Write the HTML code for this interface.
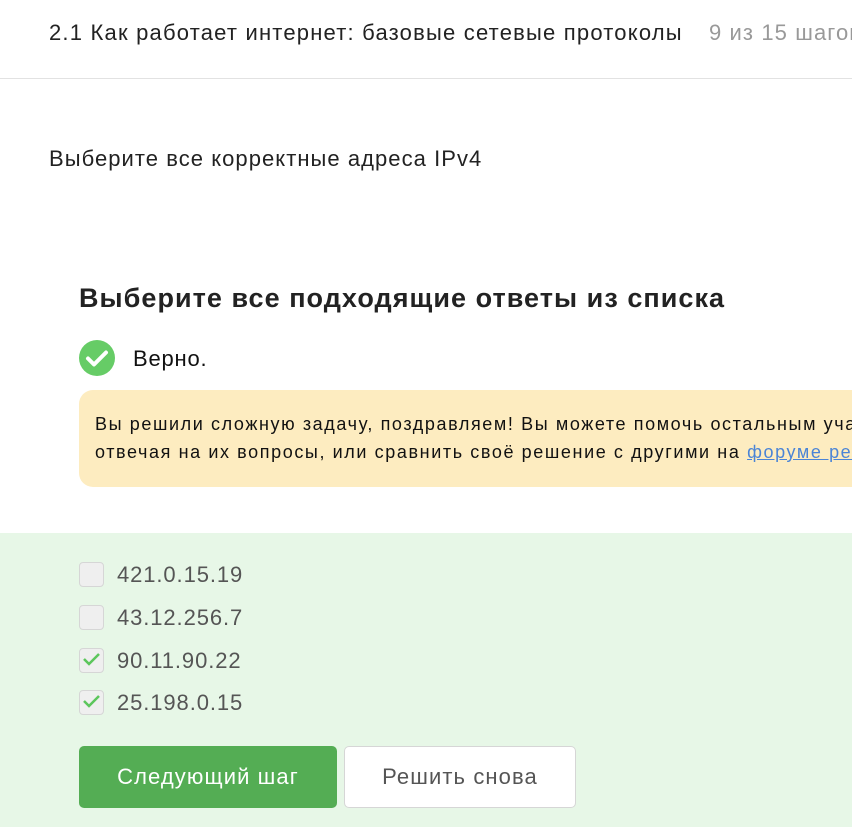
<!DOCTYPE html>
<html><head><meta charset="utf-8"><style>
*{box-sizing:border-box;margin:0;padding:0}
html,body{width:852px;height:827px;overflow:hidden}
body{background:#fff;font-family:"Liberation Sans",sans-serif;color:#222}
#w{position:relative;width:852px;height:827px;overflow:hidden}
.a{position:absolute;white-space:nowrap}
.cb{position:absolute;left:79px;width:25px;height:25px;border:1px solid #d6d6d6;border-radius:4px;background:#efefef}
.ip{position:absolute;left:117px;font-size:22px;color:#555;line-height:26px;letter-spacing:0.9px}
</style></head><body><div id="w">
<div class="a" style="left:49px;top:20px;font-size:22px;line-height:26px;color:#222;letter-spacing:1.2px">2.1 Как работает интернет: базовые сетевые протоколы</div>
<div class="a" style="left:709px;top:20px;font-size:22px;line-height:26px;color:#999;letter-spacing:1.1px">9 из 15 шагов</div>
<div class="a" style="left:0;top:78px;width:852px;height:1px;background:#e2e2e2"></div>
<div class="a" style="left:49px;top:146px;font-size:22px;line-height:26px;letter-spacing:1.05px">Выберите все корректные адреса IPv4</div>
<div class="a" style="left:79px;top:282px;font-size:27px;font-weight:bold;line-height:32px;color:#222;letter-spacing:1.05px">Выберите все подходящие ответы из списка</div>
<svg class="a" style="left:79px;top:340px" width="36" height="36" viewBox="0 0 36 36"><circle cx="18" cy="18" r="18" fill="#66cc66"/><path d="M9 18.5l6 6 12-12" stroke="#fff" stroke-width="4" fill="none" stroke-linecap="round" stroke-linejoin="round"/></svg>
<div class="a" style="left:133px;top:346px;font-size:22px;line-height:26px;color:#111;letter-spacing:0.8px">Верно.</div>
<div class="a" style="left:79px;top:390px;width:773px;height:97px;background:#fdecc0;border-radius:14px 0 0 14px"></div>
<div class="a" style="left:95px;top:410px;width:757px;overflow:hidden;font-size:18px;line-height:28px;color:#111;letter-spacing:1.6px">Вы решили сложную задачу, поздравляем! Вы можете помочь остальным учащимся,<br>отвечая на их вопросы, или сравнить своё решение с другими на <span style="color:#4a84d6;text-decoration:underline">форуме решений</span></div>
<div class="a" style="left:0;top:533px;width:852px;height:294px;background:#e7f7e7"></div>
<div class="cb" style="top:562px"></div><div class="ip" style="top:562px">421.0.15.19</div>
<div class="cb" style="top:605px"></div><div class="ip" style="top:605px">43.12.256.7</div>
<div class="cb" style="top:648px"></div><div class="ip" style="top:648px">90.11.90.22</div>
<div class="cb" style="top:690px"></div><div class="ip" style="top:690px">25.198.0.15</div>
<svg class="a" style="left:81px;top:649px" width="22" height="20"><path d="M3 10l5 5 10-10" stroke="#5cc65c" stroke-width="2.5" fill="none"/></svg>
<svg class="a" style="left:81px;top:691px" width="22" height="20"><path d="M3 10l5 5 10-10" stroke="#5cc65c" stroke-width="2.5" fill="none"/></svg>
<div class="a" style="left:79px;top:746px;width:258px;height:62px;background:#54ad54;border-radius:5px;color:#fff;font-size:22px;line-height:62px;text-align:center;letter-spacing:1.1px">Следующий шаг</div>
<div class="a" style="left:344px;top:746px;width:232px;height:62px;background:#fff;border:1px solid #d6d6d6;border-radius:5px;color:#555;font-size:22px;line-height:60px;text-align:center;letter-spacing:1.1px">Решить снова</div>
</div></body></html>
